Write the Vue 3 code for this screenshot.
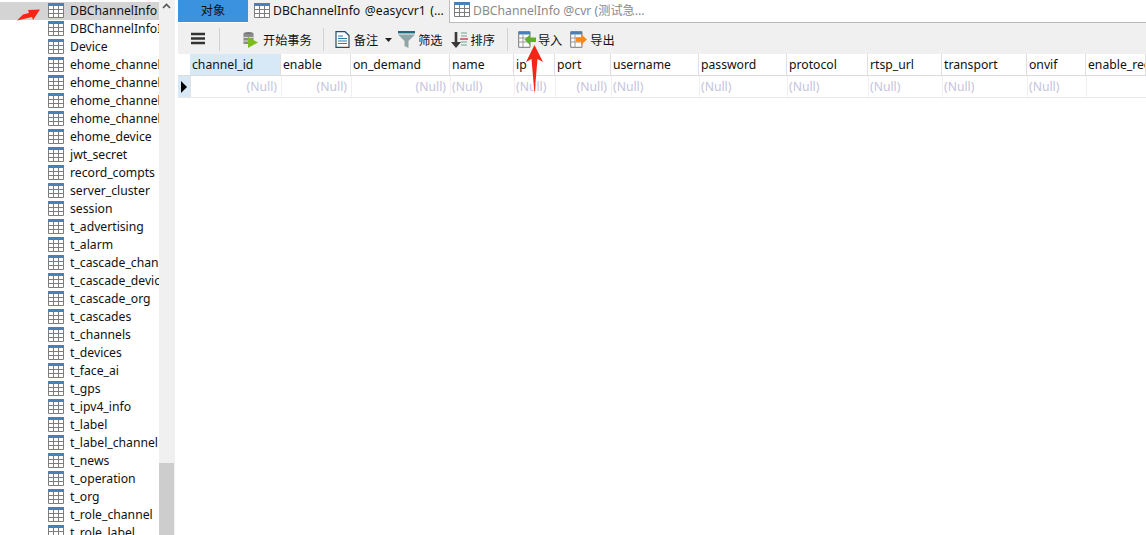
<script setup>
const tables = ['DBChannelInfo','DBChannelInfoI','Device','ehome_channel_','ehome_channel_','ehome_channel_','ehome_channel_','ehome_device','jwt_secret','record_compts','server_cluster','session','t_advertising','t_alarm','t_cascade_chan','t_cascade_devic','t_cascade_org','t_cascades','t_channels','t_devices','t_face_ai','t_gps','t_ipv4_info','t_label','t_label_channel','t_news','t_operation','t_org','t_role_channel','t_role_label']
const cols = [
  { n:'channel_id', w:91, r:true, sel:true },
  { n:'enable', w:70, r:true },
  { n:'on_demand', w:99, r:true },
  { n:'name', w:64 },
  { n:'ip', w:41 },
  { n:'port', w:56, r:true },
  { n:'username', w:88 },
  { n:'password', w:88 },
  { n:'protocol', w:81 },
  { n:'rtsp_url', w:74 },
  { n:'transport', w:85 },
  { n:'onvif', w:59 },
  { n:'enable_rec', w:60, empty:true },
]
</script>

<template>
  <div class="app">
    <aside class="side">
      <ul class="list">
        <li v-for="(t, i) in tables" :key="i" class="item" :class="{ on: i === 0 }">
          <svg class="tbl" width="16" height="15" viewBox="0 0 16 15">
            <rect x="0" y="0" width="16" height="3" fill="#4a80b8"/>
            <path d="M.5 3V14.500H15.500V3M.5 6.500H15.500M.5 10.500H15.500M5.500 3V14.500M10.500 3V14.500" fill="#fff" stroke="#7d7d7d"/>
          </svg>
          <span class="name">{{ t }}</span>
        </li>
      </ul>
    </aside>
    <div class="scroll">
      <svg class="chev" width="9" height="6" viewBox="0 0 9 6"><path d="M1 5L4.500 1.500L8 5" fill="none" stroke="#555" stroke-width="1.6"/></svg>
      <div class="thumb"></div>
    </div>
    <main class="main">
      <div class="tabs">
        <div class="tab obj">对象</div>
        <div class="tab act">
          <svg class="tbl" width="16" height="15" viewBox="0 0 16 15"><rect x="0" y="0" width="16" height="3" fill="#4a80b8"/><path d="M.5 3V14.500H15.500V3M.5 6.500H15.500M.5 10.500H15.500M5.500 3V14.500M10.500 3V14.500" fill="#fff" stroke="#7d7d7d"/></svg>
          <span>DBChannelInfo @easycvr1 (...</span>
        </div>
        <div class="tab idle">
          <svg class="tbl" width="16" height="15" viewBox="0 0 16 15"><rect x="0" y="0" width="16" height="3" fill="#4a80b8"/><path d="M.5 3V14.500H15.500V3M.5 6.500H15.500M.5 10.500H15.500M5.500 3V14.500M10.500 3V14.500" fill="#fff" stroke="#7d7d7d"/></svg>
          <span>DBChannelInfo @cvr (测试急...</span>
        </div>
      </div>
      <div class="bar">
        <svg class="menu" width="14" height="13" viewBox="0 0 14 13"><path d="M0 2H14M0 6.500H14M0 11H14" stroke="#333" stroke-width="2.4"/></svg>
        <i class="sep s1"></i>
        <div class="btn b1">
          <svg width="17" height="17" viewBox="0 0 17 17"><ellipse cx="6.500" cy="3" rx="5" ry="2" fill="#777"/><rect x="1.500" y="3" width="10" height="10" fill="#8c8c8c"/><path d="M1.500 6.500H11.500M1.500 10H11.500" stroke="#ddd"/><path d="M6 6L16 11.500L6 17Z" fill="#7cbd1e"/></svg>
          <span>开始事务</span>
        </div>
        <i class="sep s2"></i>
        <div class="btn b2">
          <svg width="15" height="17" viewBox="0 0 15 17"><path d="M1 .7H10L14 4.500V16.300H1Z" fill="#fff" stroke="#2b4a66" stroke-width="1.2"/><path d="M3 5H8M3 7.500H12M3 10H12M3 12.500H12" stroke="#2a7ab0" stroke-width="1.2"/></svg>
          <span>备注</span>
          <svg class="caret" width="7" height="4" viewBox="0 0 7 4"><path d="M0 0H7L3.500 4Z" fill="#222"/></svg>
        </div>
        <div class="btn b3">
          <svg width="17" height="17" viewBox="0 0 17 17"><rect x="0" y="0" width="17" height="2.400" fill="#1d6a82"/><path d="M0 3.500H17L10.500 10V17L6.500 15V10Z" fill="#8fa6a8"/></svg>
          <span>筛选</span>
        </div>
        <div class="btn b4">
          <svg width="17" height="17" viewBox="0 0 17 17"><path d="M3.700 1H6.300V11H10L5 17L0 11H3.700Z" fill="#3a3a3a"/><path d="M10 2H16M10 5H16M10 11H16M10 14H16" stroke="#67a78e"/><path d="M9 8H17" stroke="#d8203c" stroke-width="1.300"/></svg>
          <span>排序</span>
        </div>
        <i class="sep s3"></i>
        <div class="btn b5">
          <svg width="18" height="17" viewBox="0 0 18 17"><path d="M.7.7H12V16.300H.7Z" fill="#fff" stroke="#777"/><path d="M.7.7H12V3.500H.7Z" fill="#4a80b8"/><path d="M.7 7H12M.7 11H12M5 3.500V16" stroke="#999"/><path d="M6.500 8.500L12 3.500V6.500H18V11H12V14Z" fill="#62ad2a"/></svg>
          <span>导入</span>
        </div>
        <div class="btn b6">
          <svg width="17" height="17" viewBox="0 0 17 17"><path d="M.7.7H12V16.300H.7Z" fill="#fff" stroke="#777"/><path d="M.7.7H12V3.500H.7Z" fill="#4a80b8"/><path d="M.7 7H12M.7 11H12M5 3.500V16" stroke="#999"/><path d="M17 8.500L11 3V6.300H6V10.800H11V14Z" fill="#f5891f"/></svg>
          <span>导出</span>
        </div>
      </div>
      <div class="grid">
        <div class="row head">
          <div class="mark"></div>
          <div v-for="c in cols" :key="c.n" class="cell" :class="{ sel: c.sel }" :style="{ width: c.w + 'px', flexBasis: c.w + 'px' }">{{ c.n }}</div>
        </div>
        <div class="row body">
          <div class="mark cur"><svg width="6" height="12" viewBox="0 0 6 12"><path d="M0 0L6 6L0 12Z" fill="#000"/></svg></div>
          <div v-for="c in cols" :key="c.n" class="cell" :class="{ right: c.r }" :style="{ width: c.w + 'px', flexBasis: c.w + 'px' }">{{ c.empty ? '' : '(Null)' }}</div>
        </div>
      </div>
    </main>
    <svg class="arrow a1" width="24" height="13" viewBox="0 0 24 13"><path d="M0 11.500L6 5.500L12 4L11 1L23 .5L16 11L15 8Z" fill="#f42617"/></svg>
    <svg class="arrow a2" width="18" height="49" viewBox="0 0 18 49"><path d="M8.500 0L17 17L11.500 14L8.500 49L5.500 14L0 17Z" fill="#f42617"/></svg>
  </div>
</template>

<style>
html, body { margin: 0; background: #fff; overflow: hidden; }
</style>

<style scoped>
.app {
  position: relative;
  display: flex;
  width: 1146px;
  height: 535px;
  overflow: hidden;
  background: #fff;
  color: #111;
  font: 12.2px "Noto Sans", "Noto Sans CJK SC", sans-serif;
}
.side { width: 159px; flex: none; overflow: hidden; padding-top: 2px; box-sizing: border-box; }
.list { margin: 0; padding: 0; list-style: none; }
.item { display: flex; align-items: center; height: 18px; padding-left: 48px; white-space: nowrap; overflow: hidden; }
.item.on { background: #d4d4d4; }
.tbl { flex: none; margin-bottom: 1px; }
.name { margin-left: 6px; line-height: 16px; }
.scroll { position: relative; width: 16px; flex: none; background: #f0f0f0; margin-right: 3px; }
.chev { position: absolute; left: 3px; top: 3px; }
.thumb { position: absolute; left: 0; right: 1px; top: 463px; bottom: 0; background: #cdcdcd; }
.main { flex: 1; min-width: 0; display: flex; flex-direction: column; }
.tabs { display: flex; height: 23px; flex: none; }
.tab { display: flex; align-items: center; box-sizing: border-box; white-space: nowrap; padding-bottom: 3px; }
.tab .tbl { margin-right: 3px; margin-bottom: 0; }
.obj { width: 70px; justify-content: center; background: #3b93df; height: 22px; }
.act { width: 201px; padding-left: 6px; background: #f0f0f0; word-spacing: 1.5px; }
.idle { flex: 1; padding-left: 4px; color: #8a8a8a; background: #fff; border: 0 solid #bbb; border-width: 0 0 1px 1px; }
.bar { display: flex; align-items: center; height: 31px; padding-top: 2px; box-sizing: border-box; flex: none; background: #f0f0f0; }
.menu { margin-left: 13px; margin-bottom: 2px; flex: none; }
.sep { width: 1px; height: 23px; background: #d2d2d2; flex: none; }
.btn { display: flex; align-items: center; flex: none; white-space: nowrap; }
.btn span { margin-left: 4px; }
.s1 { margin-left: 14px; }
.b1 { margin-left: 22px; }
.s2 { margin-left: 11px; }
.b2 { margin-left: 11px; }
.caret { margin-left: 7px; }
.b3 { margin-left: 6px; }
.b3 span, .b4 span { margin-left: 3px; }
.b4 { margin-left: 8px; }
.s3 { margin-left: 12px; }
.b5 { margin-left: 10px; }
.b5 span { margin-left: 2px; }
.b6 { margin-left: 8px; }
.b6 span { margin-left: 3px; }
.grid { flex: 1; background: #fff; overflow: hidden; }
.row { display: flex; height: 22px; box-sizing: border-box; border-bottom: 1px solid #e8e8e8; }
.head { border-bottom-color: #dcdcdc; }
.mark { width: 12px; flex: none; display: flex; align-items: center; justify-content: center; }
.cur { background: #d7e8f7; border-right: 1px solid #e2e2e2; }
.cell { flex: none; box-sizing: border-box; padding: 0 2px; line-height: 21px; white-space: nowrap; overflow: hidden; border-right: 1px solid #e8e8e8; }
.head .cell { border-right-color: #dfdfdf; }
.body .cell { color: #c4c4dc; padding-left: 1px; border-right-color: #f0f0f0; }
.body .right { text-align: right; padding-right: 4px; }
.sel { background: #d7e8f7; }
.arrow { position: absolute; }
.a1 { left: 17px; top: 9px; }
.a2 { left: 526px; top: 45px; }
</style>
